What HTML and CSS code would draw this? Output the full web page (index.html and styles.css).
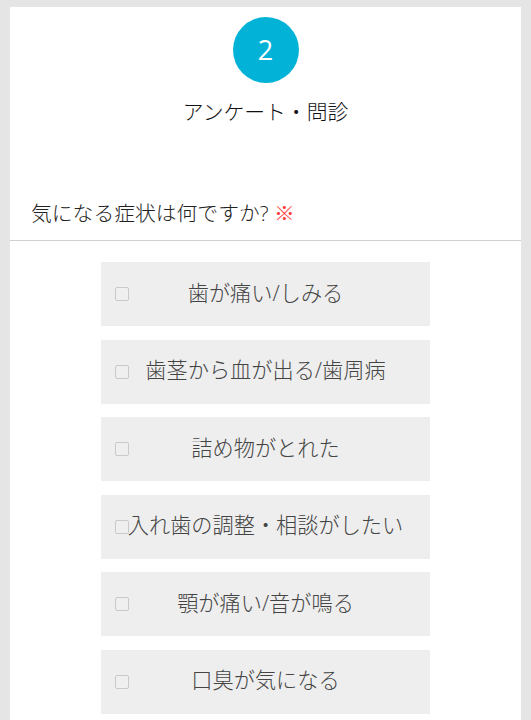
FILE: index.html
```html
<!DOCTYPE html>
<html lang="ja">
<head>
    <meta charset="UTF-8">
    <meta name="viewport" content="width=device-width, initial-scale=1.0">
    <title>アンケート・問診</title>
    <link rel="stylesheet" href="styles.css">
</head>
<body>
    <div class="card">
        <div class="step">
            <div class="step-number">2</div>
            <h1 class="step-title">アンケート・問診</h1>
        </div>

        <div class="question">
            気になる症状は何ですか? <span class="required">※</span>
        </div>

        <div class="options">
            <label class="option">
                <input type="checkbox" name="symptom">
                <span class="option-text">歯が痛い/しみる</span>
            </label>
            <label class="option">
                <input type="checkbox" name="symptom">
                <span class="option-text">歯茎から血が出る/歯周病</span>
            </label>
            <label class="option">
                <input type="checkbox" name="symptom">
                <span class="option-text">詰め物がとれた</span>
            </label>
            <label class="option">
                <input type="checkbox" name="symptom">
                <span class="option-text">入れ歯の調整・相談がしたい</span>
            </label>
            <label class="option">
                <input type="checkbox" name="symptom">
                <span class="option-text">顎が痛い/音が鳴る</span>
            </label>
            <label class="option">
                <input type="checkbox" name="symptom">
                <span class="option-text">口臭が気になる</span>
            </label>
        </div>
    </div>
</body>
</html>
```

FILE: styles.css
```css
body {
    font-family: "Open Sans", "Noto Sans CJK JP", sans-serif;
    background-color: #e5e5e5;
    margin: 0;
    padding: 7px 10px 0 10px;
}

.card {
    width: 511px;
    background-color: #fff;
    padding-bottom: 40px;
}

.step {
    padding-top: 10px;
    text-align: center;
}

.step-number {
    width: 66px;
    height: 66px;
    margin: 0 auto;
    border-radius: 50%;
    background-color: #02b3d7;
    color: #fff;
    font-size: 27px;
    line-height: 66px;
}

.step-title {
    margin: 14px 0 0 0;
    font-size: 20.8px;
    font-weight: 300;
    line-height: 30px;
    color: #111;
}

.question {
    margin-top: 71px;
    padding: 0 21px 12px 21px;
    font-size: 20.8px;
    font-weight: 300;
    line-height: 30px;
    color: #222;
    border-bottom: 1px solid #d0d0d0;
}

.required {
    color: #ff3b3b;
}

.options {
    display: flex;
    flex-direction: column;
    align-items: center;
    gap: 13.5px;
    padding-top: 21px;
}

.option {
    position: relative;
    width: 329px;
    height: 64px;
    box-sizing: border-box;
    padding-bottom: 6px;
    display: flex;
    align-items: center;
    justify-content: center;
    background-color: #eeeeee;
    cursor: pointer;
}

.option input[type="checkbox"] {
    position: absolute;
    left: 14px;
    top: 25px;
    width: 14px;
    height: 14px;
    margin: 0;
    appearance: none;
    border: 1px solid #c9c9c9;
    border-radius: 2px;
    background-color: #efefef;
}

.option-text {
    font-size: 21.2px;
    font-weight: 300;
    color: #444;
    white-space: nowrap;
}
```
